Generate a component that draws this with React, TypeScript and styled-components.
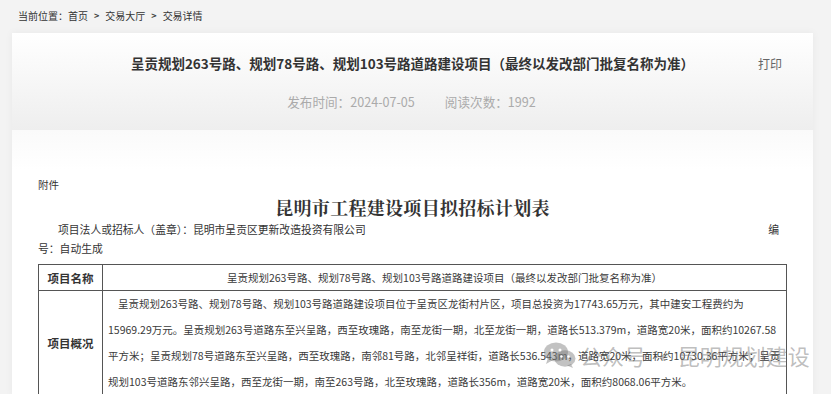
import React from "react";
import styled, { createGlobalStyle } from "styled-components";

const GlobalStyle = createGlobalStyle`
  html, body { margin: 0; padding: 0; background: #f3f3f3; }
  body { font-family: "Noto Sans CJK SC", "Noto Sans", sans-serif; color: #333; }
  * { box-sizing: border-box; }
`;

const Page = styled.div`
  position: relative;
  width: 831px;
  height: 394px;
  overflow: hidden;
  padding: 0 18px 0 12px;
`;

const Breadcrumb = styled.nav`
  height: 33px;
  display: flex;
  align-items: center;
  gap: 6px;
  padding-left: 6px;
  padding-bottom: 3px;
  font-size: 10px;
  color: #333;
`;

const Sep = styled.span`
  font-weight: 700;
  font-size: 9px;
  color: #444;
`;

const Card = styled.div`
  background: #fff;
  box-shadow: 0 0 8px rgba(0, 0, 0, 0.05);
`;

const Header = styled.header`
  height: 97px;
  padding-top: 20px;
  background: linear-gradient(#ffffff, #eeeeee);
  display: flex;
  flex-direction: column;
  align-items: center;
  gap: 19px;
`;

const TitleRow = styled.div`
  width: 100%;
  display: grid;
  grid-template-columns: 1fr auto 1fr;
  align-items: center;
  height: 20px;
`;

const Title = styled.h1`
  grid-column: 2;
  margin: 0;
  font-size: 13.5px;
  line-height: 20px;
  font-weight: 700;
  color: #333;
  white-space: nowrap;
`;

const PrintLink = styled.a`
  grid-column: 3;
  justify-self: end;
  margin-right: 31px;
  font-size: 12px;
  color: #666;
  cursor: pointer;
`;

const Meta = styled.div`
  display: flex;
  gap: 30px;
  font-size: 12.6px;
  line-height: 20px;
  color: #aaa;
  margin-left: -2px;
`;

const Body = styled.section`
  padding: 46px 26px 0 26px;
  height: 264px;
  background: linear-gradient(#fafafa, #ffffff 40px);
`;

const Attach = styled.div`
  font-size: 10.5px;
  line-height: 18px;
  color: #333;
`;

const DocTitle = styled.h2`
  margin: 1px 0 0 0;
  text-align: center;
  font-family: "Noto Serif CJK SC", "Noto Sans CJK SC", serif;
  font-size: 18px;
  line-height: 24px;
  font-weight: 700;
  letter-spacing: 0.3px;
  color: #333;
`;

const InfoRow = styled.div`
  display: flex;
  justify-content: space-between;
  font-size: 10.8px;
  line-height: 19px;
  color: #333;
  padding-left: 20px;
  padding-right: 8px;
  margin-top: 1px;
`;

const InfoLine = styled.div`
  font-size: 10.8px;
  line-height: 19px;
  color: #333;
`;

const Table = styled.div`
  margin-top: 6px;
  border: 1px solid #555;
  border-bottom: none;
  display: grid;
  grid-template-columns: 64px 1fr;
`;

const LabelCell = styled.div`
  border-bottom: 1px solid #555;
  border-right: 1px solid #555;
  display: flex;
  align-items: center;
  justify-content: center;
  font-size: 11.5px;
  font-weight: 700;
  color: #333;
`;

const ValueCell = styled.div<{ $center?: boolean }>`
  border-bottom: 1px solid #555;
  padding: 0 5px;
  font-size: 10.5px;
  line-height: 25px;
  color: #3a3a3a;
  text-align: ${(p) => (p.$center ? "center" : "left")};
`;

const Line = styled.div<{ $indent?: boolean }>`
  white-space: nowrap;
  line-height: 26px;
  text-indent: ${(p) => (p.$indent ? "10px" : "0")};
`;

const Watermark = styled.div`
  position: absolute;
  left: 543px;
  top: 341px;
  display: flex;
  align-items: center;
  gap: 3px;
  font-size: 22px;
  line-height: 28px;
  color: rgba(110, 110, 110, 0.45);
  pointer-events: none;
  white-space: nowrap;
`;

const WeChatIcon = () => (
  <svg width="34" height="26" viewBox="0 0 34 26">
    <g fill="rgba(120,120,120,0.45)">
      <ellipse cx="13" cy="10" rx="12" ry="9.5" />
      <path d="M5 16 L3 22 L10 18 Z" />
      <ellipse cx="22" cy="16.5" rx="10.5" ry="8.2" />
      <path d="M28 22 L30 26 L24 23.5 Z" />
    </g>
    <g fill="#fff">
      <circle cx="9" cy="8" r="1.5" />
      <circle cx="17" cy="8" r="1.5" />
      <circle cx="18.5" cy="14.5" r="1.2" />
      <circle cx="25.5" cy="14.5" r="1.2" />
    </g>
  </svg>
);

export default function App() {
  return (
    <>
      <GlobalStyle />
      <Page>
        <Breadcrumb>
          <span>当前位置：首页</span>
          <Sep>&gt;</Sep>
          <span>交易大厅</span>
          <Sep>&gt;</Sep>
          <span>交易详情</span>
        </Breadcrumb>
        <Card>
          <Header>
            <TitleRow>
              <Title>呈贡规划263号路、规划78号路、规划103号路道路建设项目（最终以发改部门批复名称为准）</Title>
              <PrintLink>打印</PrintLink>
            </TitleRow>
            <Meta>
              <span>发布时间：2024-07-05</span>
              <span>阅读次数：1992</span>
            </Meta>
          </Header>
          <Body>
            <Attach>附件</Attach>
            <DocTitle>昆明市工程建设项目拟招标计划表</DocTitle>
            <InfoRow>
              <span>项目法人或招标人（盖章）：昆明市呈贡区更新改造投资有限公司</span>
              <span>编</span>
            </InfoRow>
            <InfoLine>号：自动生成</InfoLine>
            <Table>
              <LabelCell>项目名称</LabelCell>
              <ValueCell $center>
                呈贡规划263号路、规划78号路、规划103号路道路建设项目（最终以发改部门批复名称为准）
              </ValueCell>
              <LabelCell>项目概况</LabelCell>
              <ValueCell>
                <Line $indent>
                  呈贡规划263号路、规划78号路、规划103号路道路建设项目位于呈贡区龙街村片区，项目总投资为17743.65万元，其中建安工程费约为
                </Line>
                <Line>
                  15969.29万元。呈贡规划263号道路东至兴呈路，西至玫瑰路，南至龙街一期，北至龙街一期，道路长513.379m，道路宽20米，面积约10267.58
                </Line>
                <Line>
                  平方米；呈贡规划78号道路东至兴呈路，西至玫瑰路，南邻81号路，北邻呈祥街，道路长536.543m，道路宽20米，面积约10730.36平方米；呈贡
                </Line>
                <Line>
                  规划103号道路东邻兴呈路，西至龙街一期，南至263号路，北至玫瑰路，道路长356m，道路宽20米，面积约8068.06平方米。
                </Line>
              </ValueCell>
            </Table>
          </Body>
        </Card>
        <Watermark>
          <WeChatIcon />
          <span>公众号 · 昆明规划建设</span>
        </Watermark>
      </Page>
    </>
  );
}
